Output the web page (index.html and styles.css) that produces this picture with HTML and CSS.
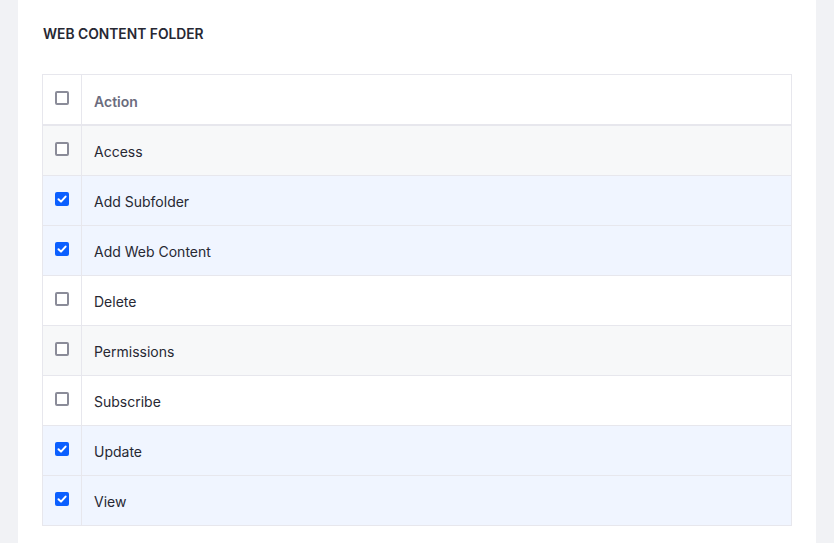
FILE: index.html
```html
<!DOCTYPE html>
<html>
<head>
<meta charset="utf-8">
<link rel="stylesheet" href="styles.css">
</head>
<body>
<div class="card">
  <h3 class="title">Web Content Folder</h3>
  <table class="perm">
    <thead>
      <tr><th class="cb-cell"><span class="cb"></span></th><th class="label">Action</th></tr>
    </thead>
    <tbody>
      <tr class="odd"><td class="cb-cell"><span class="cb"></span></td><td>Access</td></tr>
      <tr class="on"><td class="cb-cell"><span class="cb checked"><svg viewBox="0 0 14 14"><path d="M3.5 7.2 L6 9.6 L10.6 4.6" /></svg></span></td><td>Add Subfolder</td></tr>
      <tr class="on"><td class="cb-cell"><span class="cb checked"><svg viewBox="0 0 14 14"><path d="M3.5 7.2 L6 9.6 L10.6 4.6" /></svg></span></td><td>Add Web Content</td></tr>
      <tr><td class="cb-cell"><span class="cb"></span></td><td>Delete</td></tr>
      <tr class="odd"><td class="cb-cell"><span class="cb"></span></td><td>Permissions</td></tr>
      <tr><td class="cb-cell"><span class="cb"></span></td><td>Subscribe</td></tr>
      <tr class="on"><td class="cb-cell"><span class="cb checked"><svg viewBox="0 0 14 14"><path d="M3.5 7.2 L6 9.6 L10.6 4.6" /></svg></span></td><td>Update</td></tr>
      <tr class="on"><td class="cb-cell"><span class="cb checked"><svg viewBox="0 0 14 14"><path d="M3.5 7.2 L6 9.6 L10.6 4.6" /></svg></span></td><td>View</td></tr>
    </tbody>
  </table>
</div>
</body>
</html>
```
FILE: styles.css
```css
html, body {
  margin: 0;
  padding: 0;
}
body {
  background: #f1f2f5;
  font-family: Inter, "Noto Sans", sans-serif;
  color: #272833;
  height: 543px;
  overflow: hidden;
}
.card {
  margin-left: 18px;
  width: 750px;
  background: #fff;
  padding: 25px 24px 40px 24px;
  min-height: 500px;
}
.title {
  margin: 0 0 0 1px;
  font-size: 13.8px;
  font-weight: 600;
  text-transform: uppercase;
  line-height: 18px;
  color: #272833;
}
.perm {
  margin-top: 31px;
  width: 750px;
  border-collapse: collapse;
  font-size: 14px;
}
.perm th, .perm td {
  border: 1px solid #e7e7ed;
  height: 48px;
  padding: 1px 12px 0 12px;
  text-align: left;
  vertical-align: middle;
}
.perm thead th {
  border-bottom: 2px solid #e7e7ed;
}
.perm th.label {
  font-weight: 600;
  color: #6b6c7e;
  height: 45px;
  padding-top: 4px;
}
.perm .cb-cell {
  width: 14px;
  height: 49px;
  padding: 0 12px;
  line-height: 0;
}
tr.odd {
  background: #f7f8f9;
}
tr.on {
  background: #f0f5ff;
}
.cb {
  display: inline-block;
  box-sizing: border-box;
  width: 14px;
  height: 14px;
  border: 2px solid #8b8c99;
  border-radius: 2px;
  background: #fff;
  position: relative;
  top: -2px;
}
.cb.checked {
  border: none;
  background: #0b5fff;
}
.cb svg {
  width: 14px;
  height: 14px;
  display: block;
}
.cb path {
  fill: none;
  stroke: #fff;
  stroke-width: 2;
  stroke-linecap: round;
  stroke-linejoin: round;
}
```
